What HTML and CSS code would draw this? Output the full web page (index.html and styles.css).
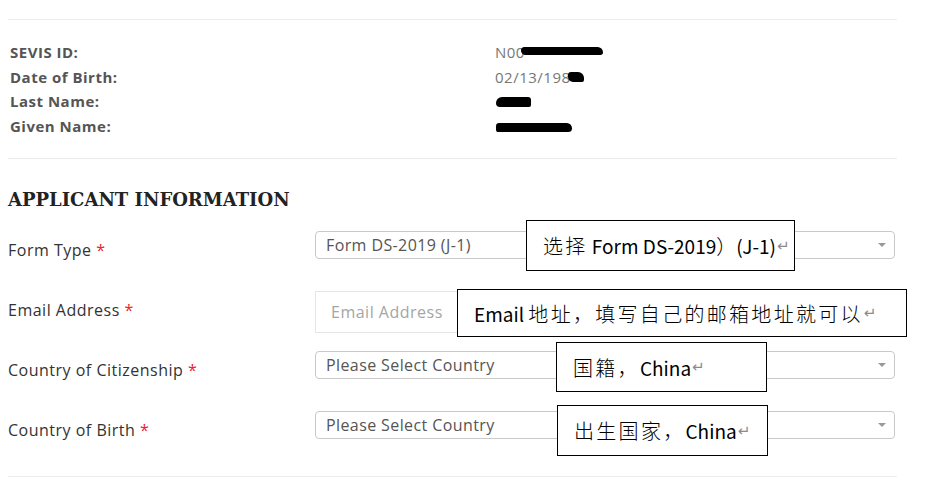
FILE: index.html
```html
<!DOCTYPE html>
<html lang="en">
<head>
<meta charset="utf-8">
<title>Applicant Information</title>
<link rel="stylesheet" href="styles.css">
</head>
<body>
<div class="page">
  <div class="rule"></div>
  <div class="info">
    <div class="k">SEVIS ID:</div>
    <div class="v">N00<span class="blob b-sevis"></span></div>
    <div class="k">Date of Birth:</div>
    <div class="v">02/13/198<span class="blob b-dob"></span></div>
    <div class="k">Last Name:</div>
    <div class="v"><span class="blob b-last"></span></div>
    <div class="k">Given Name:</div>
    <div class="v"><span class="blob b-given"></span></div>
  </div>
  <div class="rule"></div>
  <h2 class="title">APPLICANT INFORMATION</h2>
  <div class="form">
    <div class="row">
      <div class="lbl">Form Type <span class="req">*</span></div>
      <div class="select"><span class="sel-text">Form DS-2019 (J-1)</span><span class="caret"></span></div>
      <div class="note n1"><span class="zh">选择</span>&nbsp;Form DS-2019<span class="zh paren">）</span>(J-1)<span class="ret">↵</span></div>
    </div>
    <div class="row">
      <div class="lbl">Email Address <span class="req">*</span></div>
      <div class="input"><span class="placeholder">Email Address</span></div>
      <div class="note n2">Email&nbsp;<span class="zh">地址，填写自己的邮箱地址就可以</span><span class="ret">↵</span></div>
    </div>
    <div class="row">
      <div class="lbl">Country of Citizenship <span class="req">*</span></div>
      <div class="select"><span class="sel-text">Please Select Country</span><span class="caret"></span></div>
      <div class="note n3"><span class="zh">国籍，</span>China<span class="ret">↵</span></div>
    </div>
    <div class="row">
      <div class="lbl">Country of Birth <span class="req">*</span></div>
      <div class="select"><span class="sel-text">Please Select Country</span><span class="caret"></span></div>
      <div class="note n4"><span class="zh">出生国家，</span>China<span class="ret">↵</span></div>
    </div>
  </div>
  <div class="rule bottom"></div>
</div>
</body>
</html>
```
FILE: styles.css
```css
* { box-sizing: border-box; }
html, body { margin: 0; padding: 0; background: #fff; }
body { font-family: "Open Sans", "Noto Sans", sans-serif; color: #333; }

.page {
  width: 889px;
  margin-left: 8px;
  padding-top: 19px;
}

.rule { border-top: 1px solid #ececec; height: 0; }
.rule.bottom { margin-top: 5px; }

.info {
  display: grid;
  grid-template-columns: 487px 1fr;
  padding: 20px 0 20px 2px;
  line-height: 24.5px;
  font-size: 15px;
}
.info .k { font-weight: 700; color: #555; letter-spacing: 0.5px; }
.info .v { color: #777; letter-spacing: 0.5px; margin-left: -2px; display: flex; align-items: center; }

.blob { display: inline-block; background: #000; }
.b-sevis { width: 82px; height: 8px; border-radius: 4px 6px 3px 5px; margin-left: -4px; margin-top: -3px; }
.b-dob { width: 16px; height: 10px; border-radius: 3px 6px 2px 5px; margin-left: -3px; }
.b-last { width: 35px; height: 10px; border-radius: 6px 3px 2px 4px; margin-left: 1px; margin-top: 2px; }
.b-given { width: 76px; height: 9px; border-radius: 5px 8px 6px 4px; margin-left: 1px; margin-top: 3px; }

.title {
  margin: 0;
  padding-top: 29px;
  height: 72px;
  font-family: "DejaVu Serif", "Liberation Serif", serif;
  font-weight: 700;
  font-size: 18px;
  line-height: 24px;
  color: #222;
}

.form { display: flex; flex-direction: column; }
.row {
  position: relative;
  display: grid;
  grid-template-columns: 307px 580px;
  height: 60px;
  align-items: start;
}
.lbl {
  padding-top: 9px;
  line-height: 20px;
  font-size: 16px;
  letter-spacing: 0.5px;
  color: #333;
}
.req { color: #e8242b; }

.select {
  height: 28px;
  border: 1px solid #c9c9c9;
  border-radius: 4px;
  display: flex;
  align-items: center;
  padding: 0 8px 0 10px;
  font-size: 16px;
  letter-spacing: 0.4px;
  color: #555;
}
.sel-text { flex: 1; }
.caret {
  width: 0; height: 0;
  border-left: 4px solid transparent;
  border-right: 4px solid transparent;
  border-top: 4px solid #999;
}

.input {
  height: 42px;
  border: 1px solid #e6e6e6;
  display: flex;
  align-items: center;
  padding-left: 15px;
  font-size: 16px;
  letter-spacing: 0.5px;
}
.placeholder { color: #a5a5a5; }

.note {
  position: absolute;
  background: #fff;
  border: 1px solid #000;
  display: flex;
  align-items: center;
  padding-left: 16px;
  font-family: "Noto Sans CJK SC", "Noto Sans", sans-serif;
  font-size: 19px;
  color: #000;
  white-space: pre;
}
.zh { font-size: 20px; letter-spacing: 2.3px; font-weight: 300; }
.zh.paren { letter-spacing: 0; }
.ret { color: #8a8a8a; font-size: 15px; margin-left: 1px; font-family: "DejaVu Sans", sans-serif; }
.n1 { left: 518px; top: -11px; width: 269px; height: 51px; }
.n2 { left: 449px; top: -2px; width: 450px; height: 48px; }
.n3 { left: 548px; top: -9px; width: 211px; height: 50px; }
.n4 { left: 549px; top: -6px; width: 211px; height: 51px; }
```
